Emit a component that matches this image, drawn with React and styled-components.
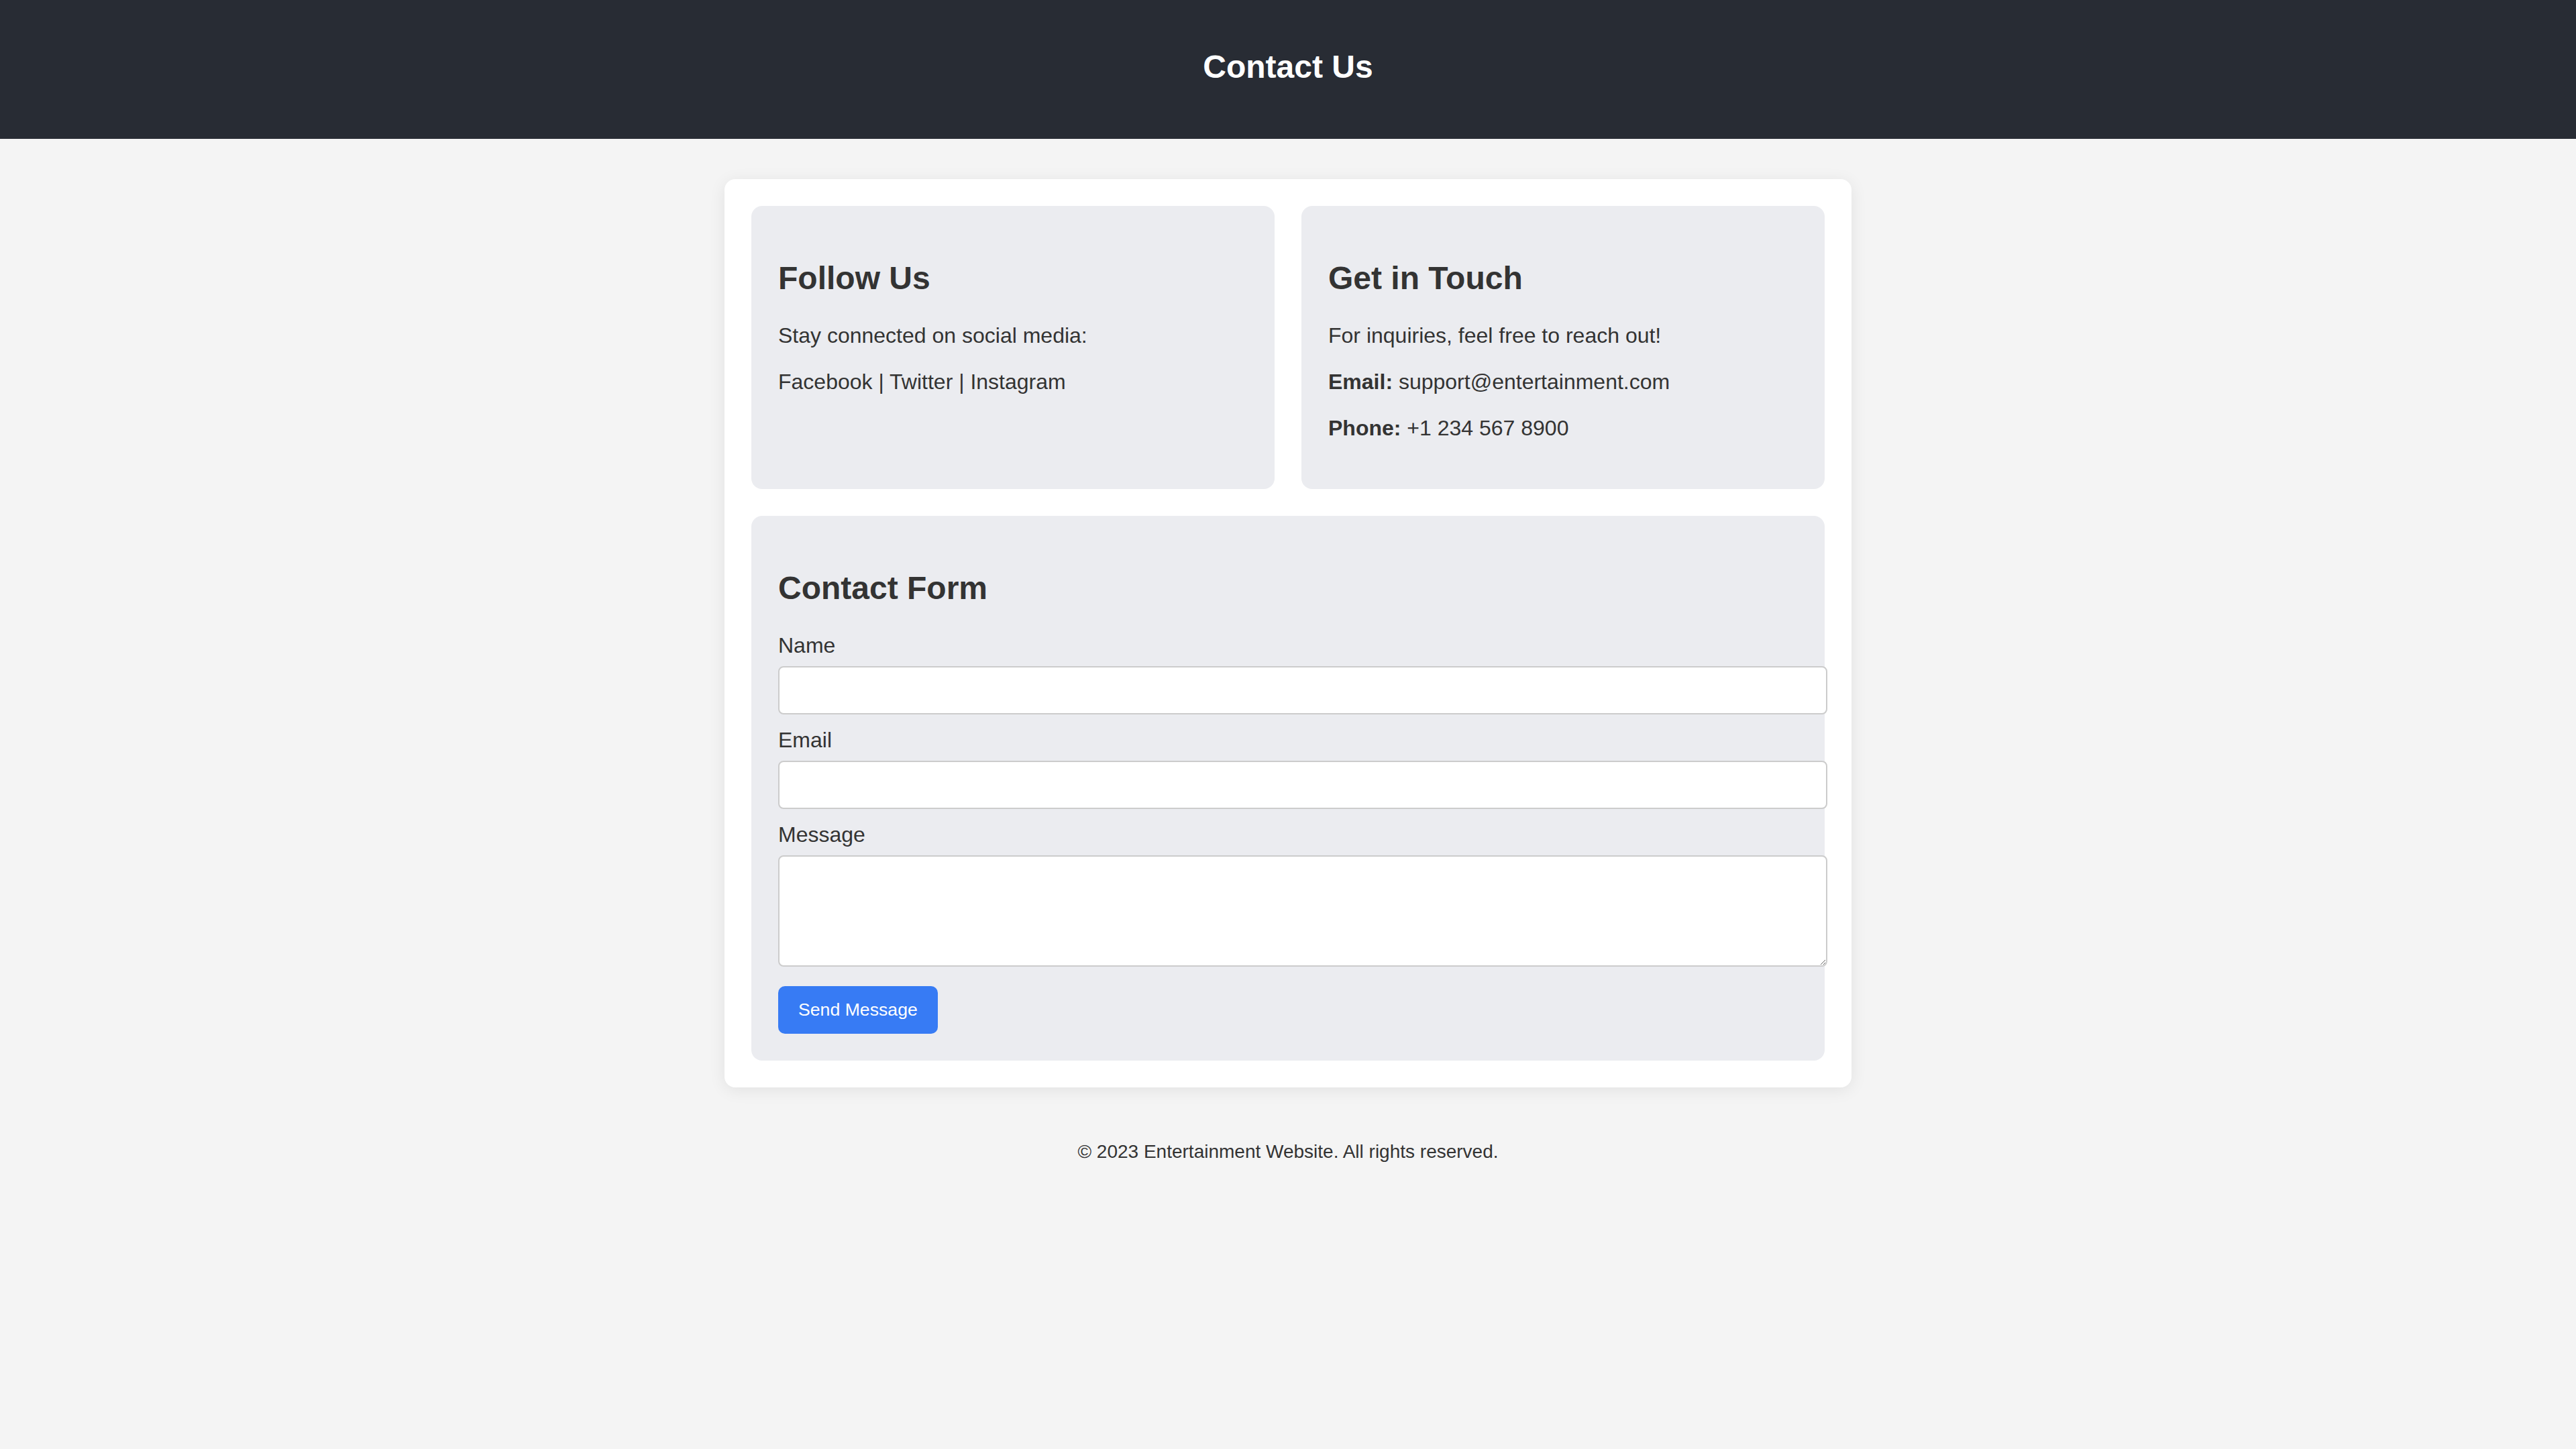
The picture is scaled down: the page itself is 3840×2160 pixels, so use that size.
import React from "react";
import styled, { createGlobalStyle } from "styled-components";

const GlobalStyle = createGlobalStyle`
  html, body {
    margin: 0;
    min-height: 100%;
    background: #f4f4f4;
  }
  body {
    font-family: "Liberation Sans", Arial, Helvetica, sans-serif;
    color: #333;
  }
`;

const Header = styled.header`
  box-sizing: border-box;
  height: 207px;
  padding-top: 72px;
  background: #282c34;
  color: #fff;
  text-align: center;
`;

const Title = styled.h1`
  margin: 0;
  font-size: 48px;
  line-height: 56px;
  font-weight: bold;
`;

const Container = styled.main`
  box-sizing: border-box;
  width: 1680px;
  margin: 60px auto 40px;
  padding: 40px;
  background: #fff;
  border-radius: 16px;
  box-shadow: 0 4px 24px rgba(0, 0, 0, 0.08);
  display: grid;
  grid-template-columns: 1fr 1fr;
  gap: 40px;
`;

const Card = styled.section`
  grid-column: ${(p) => (p.$wide ? "1 / -1" : "auto")};
  padding: 40px;
  background: #ebecf0;
  border-radius: 16px;
`;

const CardTitle = styled.h2`
  margin: 40px 0;
  font-size: 48px;
  font-weight: bold;
  color: #333;
`;

const Text = styled.p`
  margin: 32px 0;
  font-size: 32px;
  color: #333;
`;

const Label = styled.label`
  display: block;
  margin-bottom: 12px;
  font-size: 32px;
  color: #333;
`;

const Field = styled.input`
  display: block;
  box-sizing: content-box;
  width: 100%;
  height: 34px;
  padding: 17px 20px;
  margin: 0 0 20px;
  border: 2px solid #ccc;
  border-radius: 8px;
  background: #fff;
  font-family: inherit;
  font-size: 26px;
  outline: none;
`;

const MessageBox = styled.textarea`
  display: block;
  box-sizing: content-box;
  width: 100%;
  height: 122px;
  padding: 20px;
  margin: 0 0 29px;
  border: 2px solid #ccc;
  border-radius: 8px;
  background: #fff;
  font-family: inherit;
  font-size: 26px;
  outline: none;
`;

const SendButton = styled.button`
  display: block;
  padding: 20px 30px;
  border: none;
  border-radius: 10px;
  background: #377bf4;
  color: #fff;
  font-family: "Liberation Sans", Arial, sans-serif;
  font-size: 26.67px;
  cursor: pointer;
`;

const Footer = styled.footer`
  padding: 40px;
  text-align: center;
  font-size: 28px;
  color: #333;
`;

export default function App() {
  return (
    <>
      <GlobalStyle />
      <Header>
        <Title>Contact Us</Title>
      </Header>
      <Container>
        <Card>
          <CardTitle>Follow Us</CardTitle>
          <Text>Stay connected on social media:</Text>
          <Text>Facebook | Twitter | Instagram</Text>
        </Card>
        <Card>
          <CardTitle>Get in Touch</CardTitle>
          <Text>For inquiries, feel free to reach out!</Text>
          <Text>
            <strong>Email:</strong> support@entertainment.com
          </Text>
          <Text>
            <strong>Phone:</strong> +1 234 567 8900
          </Text>
        </Card>
        <Card $wide>
          <CardTitle>Contact Form</CardTitle>
          <form onSubmit={(e) => e.preventDefault()}>
            <Label htmlFor="name">Name</Label>
            <Field id="name" type="text" />
            <Label htmlFor="email">Email</Label>
            <Field id="email" type="email" />
            <Label htmlFor="message">Message</Label>
            <MessageBox id="message" />
            <SendButton type="submit">Send Message</SendButton>
          </form>
        </Card>
      </Container>
      <Footer>© 2023 Entertainment Website. All rights reserved.</Footer>
    </>
  );
}
